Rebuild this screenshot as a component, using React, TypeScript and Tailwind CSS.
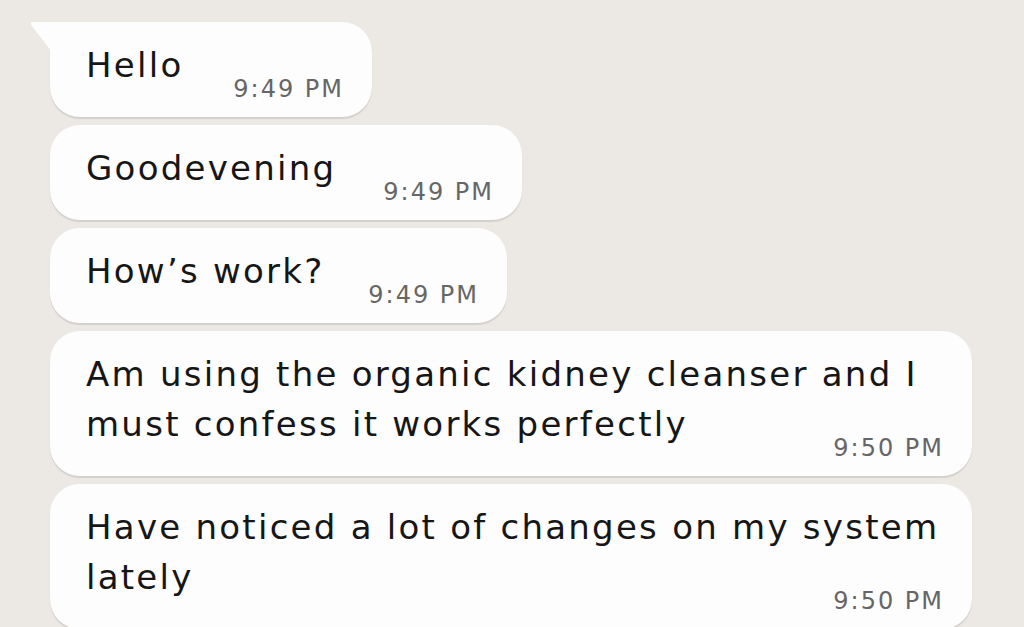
const messages = [
  { lines: ["Hello"], time: "9:49 PM", width: "w-[322px]", first: true },
  { lines: ["Goodevening"], time: "9:49 PM", width: "w-[472px]" },
  { lines: ["How’s work?"], time: "9:49 PM", width: "w-[457px]" },
  {
    lines: ["Am using the organic kidney cleanser and I", "must confess it works perfectly"],
    time: "9:50 PM",
    width: "w-[922px]",
  },
  {
    lines: ["Have noticed a lot of changes on my system", "lately"],
    time: "9:50 PM",
    width: "w-[922px]",
  },
];

type Msg = (typeof messages)[number] & { first?: boolean };

const Bubble = ({ msg }: { msg: Msg }) => {
  const time = (
    <span className="text-[24px] leading-[28px] tracking-[2px] text-[#666666] whitespace-nowrap">
      {msg.time}
    </span>
  );

  return (
    <div
      className={`relative ${msg.width} bg-[#fdfdfd] rounded-[30px] ${
        msg.first ? "rounded-tl-none" : ""
      } pl-[36px] pr-[28px] pt-[18px] pb-[14px] shadow-[0_2px_1px_rgba(0,0,0,0.10)]`}
    >
      {msg.first && (
        <svg
          className="absolute -left-[20px] top-0"
          width="22"
          height="30"
          viewBox="0 0 22 30"
        >
          <path d="M2 0 H22 V30 L1.5 3.5 Q0 0 2 0 Z" fill="#fdfdfd" />
        </svg>
      )}
      {msg.lines.length > 1 ? (
        <>
          <div className="text-[34px] leading-[50px] tracking-[2.25px] text-[#161616]">
            {msg.lines.map((l, i) => (
              <span key={i} className="block w-fit whitespace-nowrap">
                {l}
              </span>
            ))}
          </div>
          <div className="flex justify-end -mt-[15px]">{time}</div>
        </>
      ) : (
        <div className="flex items-end justify-between">
          <span className="text-[34px] leading-[50px] tracking-[2.25px] text-[#161616] mb-[13px]">
            {msg.lines[0]}
          </span>
          {time}
        </div>
      )}
    </div>
  );
};

const App = () => {
  return (
    <div
      className="w-[1024px] h-[627px] overflow-hidden bg-[#ece8e3] pl-[50px] pt-[22px]"
      style={{ fontFamily: '"DejaVu Sans", sans-serif' }}
    >
      <div className="flex flex-col gap-[8px]">
        {messages.map((m, i) => (
          <Bubble key={i} msg={m} />
        ))}
      </div>
    </div>
  );
};

export default App;
